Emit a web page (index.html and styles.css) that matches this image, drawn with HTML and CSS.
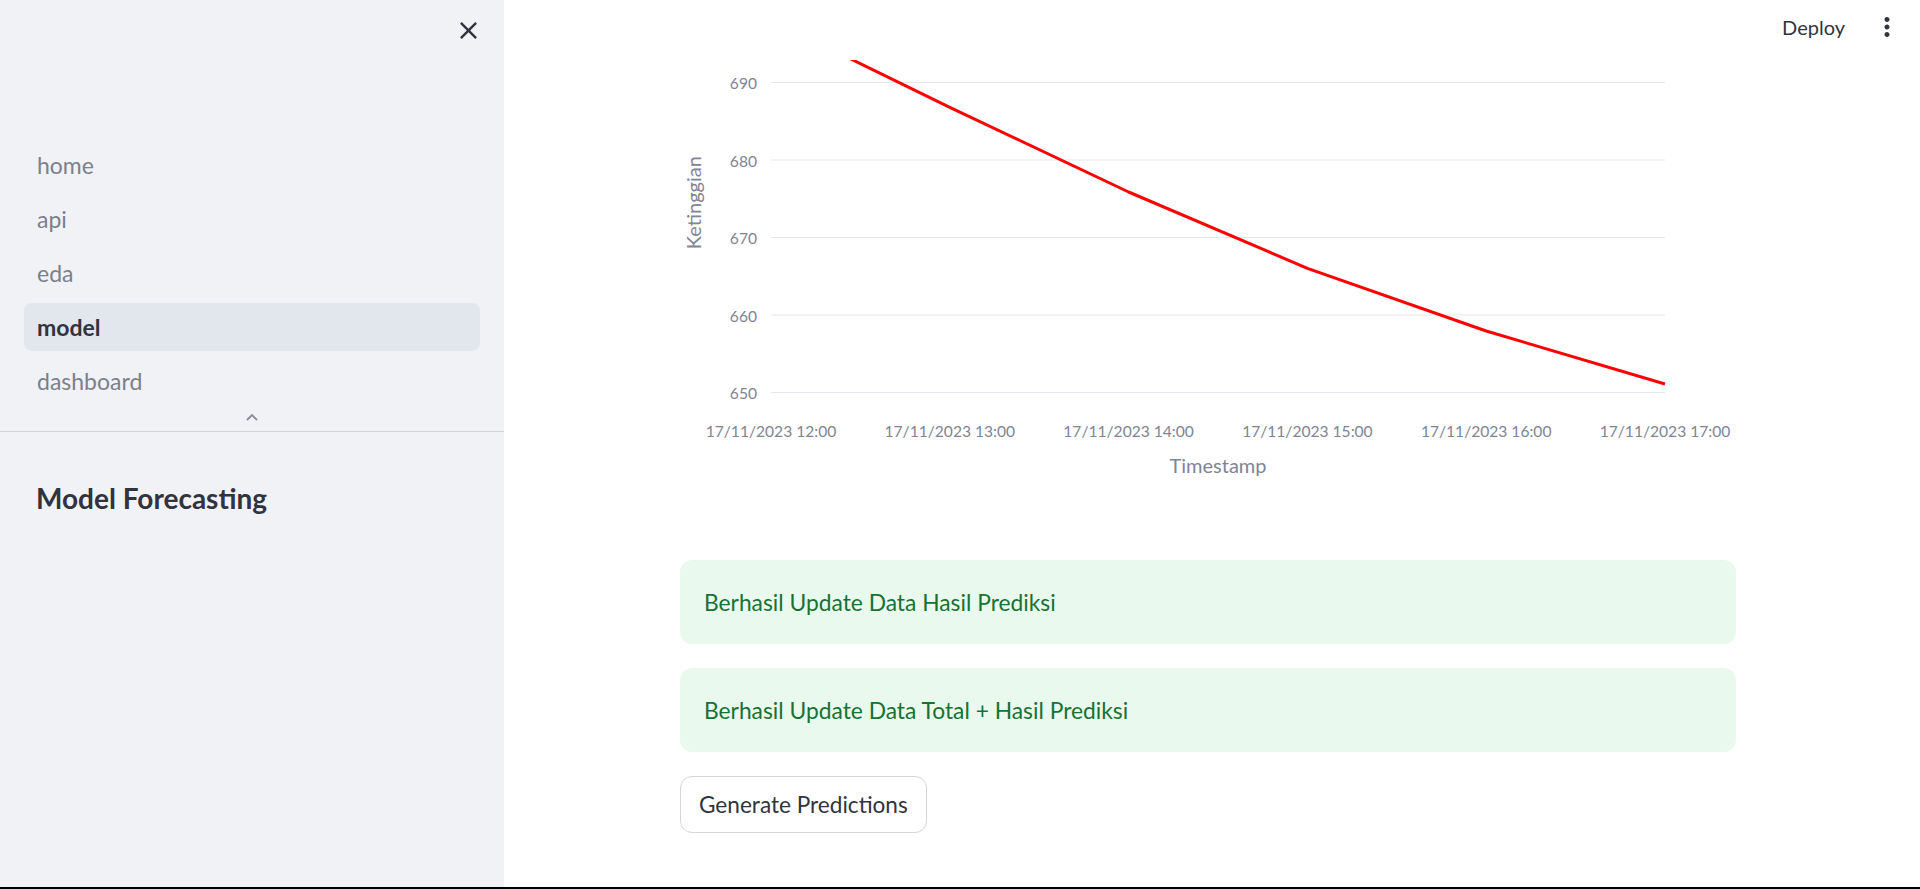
FILE: index.html
```html
<!DOCTYPE html>
<html lang="en">
<head>
<meta charset="utf-8">
<title>model</title>
<link rel="stylesheet" href="styles.css">
</head>
<body>
<div class="app">
  <aside class="sidebar">
    <div class="sidebar-top">
      <button class="icon-btn close-btn" aria-label="Close sidebar">
        <svg viewBox="0 0 24 24" width="29" height="29"><path fill="#31333f" d="M19 6.41L17.59 5 12 10.59 6.41 5 5 6.41 10.59 12 5 17.59 6.41 19 12 13.41 17.59 19 19 17.59 13.41 12z"/></svg>
      </button>
    </div>
    <nav class="nav">
      <a class="nav-item">home</a>
      <a class="nav-item">api</a>
      <a class="nav-item">eda</a>
      <a class="nav-item active">model</a>
      <a class="nav-item">dashboard</a>
    </nav>
    <div class="nav-toggle">
      <svg viewBox="0 0 12 8" width="12" height="8"><path d="M1 7 L6 2 L11 7" fill="none" stroke="#8a8c99" stroke-width="1.8"/></svg>
    </div>
    <div class="sidebar-content">
      <h3 class="sidebar-title">Model Forecasting</h3>
    </div>
  </aside>
  <main class="main">
    <header class="header">
      <div class="toolbar">
        <span class="deploy">Deploy</span>
        <button class="icon-btn menu-btn" aria-label="Menu">
          <svg viewBox="0 0 24 24" width="30" height="30"><path fill="#31333f" d="M12 8c1.1 0 2-.9 2-2s-.9-2-2-2-2 .9-2 2 .9 2 2 2zm0 2c-1.1 0-2 .9-2 2s.9 2 2 2 2-.9 2-2-.9-2-2-2zm0 6c-1.1 0-2 .9-2 2s.9 2 2 2 2-.9 2-2-.9-2-2-2z"/></svg>
        </button>
      </div>
    </header>
    <div class="block">
      <svg class="chart" viewBox="0 0 1056 476" width="1056" height="476">
        <g class="grid">
          <line x1="91" x2="985" y1="22.5" y2="22.5"/>
          <line x1="91" x2="985" y1="100" y2="100"/>
          <line x1="91" x2="985" y1="177.5" y2="177.5"/>
          <line x1="91" x2="985" y1="255" y2="255"/>
          <line x1="91" x2="985" y1="332.5" y2="332.5"/>
        </g>
        <g class="tick ytick">
          <text x="77" y="29">690</text>
          <text x="77" y="106.5">680</text>
          <text x="77" y="184">670</text>
          <text x="77" y="261.5">660</text>
          <text x="77" y="339">650</text>
        </g>
        <g class="tick xtick">
          <text x="91" y="377">17/11/2023 12:00</text>
          <text x="269.8" y="377">17/11/2023 13:00</text>
          <text x="448.6" y="377">17/11/2023 14:00</text>
          <text x="627.4" y="377">17/11/2023 15:00</text>
          <text x="806.2" y="377">17/11/2023 16:00</text>
          <text x="985" y="377">17/11/2023 17:00</text>
        </g>
        <text class="axis-title" x="538" y="413">Timestamp</text>
        <text class="axis-title" transform="translate(20.5,142.7) rotate(-90)">Ketinggian</text>
        <polyline class="series" points="91,-40 269.8,47.3 448.6,132 627.4,208.3 806.2,271 985,324"/>
      </svg>
      <div class="alert">Berhasil Update Data Hasil Prediksi</div>
      <div class="alert">Berhasil Update Data Total + Hasil Prediksi</div>
      <div><button class="btn">Generate Predictions</button></div>
    </div>
  </main>
</div>
</body>
</html>
```
FILE: styles.css
```css
html {
  background: #000;
}
body {
  margin: 0;
  font-family: Lato, "Noto Sans", sans-serif;
  color: #31333f;
}
.app {
  display: flex;
  height: 887px;
  background: #fff;
  overflow: hidden;
}
.icon-btn {
  border: 0;
  background: transparent;
  padding: 0;
  display: flex;
  cursor: pointer;
}
.sidebar {
  width: 504px;
  flex: none;
  background: #f0f2f6;
  display: flex;
  flex-direction: column;
}
.sidebar-top {
  height: 60px;
  display: flex;
  justify-content: flex-end;
  align-items: center;
  padding-right: 21px;
}
.nav {
  padding: 81px 24px 0;
  display: flex;
  flex-direction: column;
  gap: 6px;
}
.nav-item {
  height: 48px;
  display: flex;
  align-items: center;
  padding-left: 13px;
  border-radius: 8px;
  font-size: 23px;
  color: #7d7f8b;
}
.nav-item.active {
  background: #e2e6ed;
  color: #31333f;
  font-weight: 700;
}
.nav-toggle {
  height: 26px;
  display: flex;
  justify-content: center;
  align-items: center;
  border-bottom: 1px solid #d3d4da;
}
.nav-toggle svg {
  margin-top: -2px;
}
.sidebar-content {
  padding: 48px 36px 0;
}
.sidebar-title {
  margin: 0;
  font-size: 28px;
  line-height: 36px;
  font-weight: 700;
  color: #31333f;
}
.main {
  flex: 1;
  display: flex;
  flex-direction: column;
  padding-right: 8px;
}
.header {
  height: 60px;
  display: flex;
  justify-content: flex-end;
  align-items: flex-start;
}
.toolbar {
  height: 53px;
  display: flex;
  align-items: center;
  gap: 27px;
  padding-right: 10px;
}
.deploy {
  font-size: 20px;
  color: #31333f;
}
.block {
  width: 1056px;
  margin: 0 auto;
  display: flex;
  flex-direction: column;
  gap: 24px;
}
.chart {
  display: block;
}
.grid line {
  stroke: #e3e7ef;
  stroke-width: 1.2;
}
.tick text {
  font-size: 15.6px;
  fill: #808495;
}
.ytick text {
  text-anchor: end;
}
.xtick text {
  text-anchor: middle;
}
.axis-title {
  font-size: 20px;
  fill: #808495;
  text-anchor: middle;
}
.series {
  fill: none;
  stroke: #ff0000;
  stroke-width: 3;
  stroke-linejoin: round;
}
.alert {
  background: #e9f9ee;
  color: #177233;
  border-radius: 12px;
  padding: 24px;
  font-size: 22.8px;
  line-height: 36px;
}
.btn {
  font-family: inherit;
  font-size: 22.6px;
  color: #31333f;
  background: #fff;
  border: 1px solid #d6d6d9;
  border-radius: 12px;
  height: 57px;
  padding: 0 18px;
  cursor: pointer;
}
```
